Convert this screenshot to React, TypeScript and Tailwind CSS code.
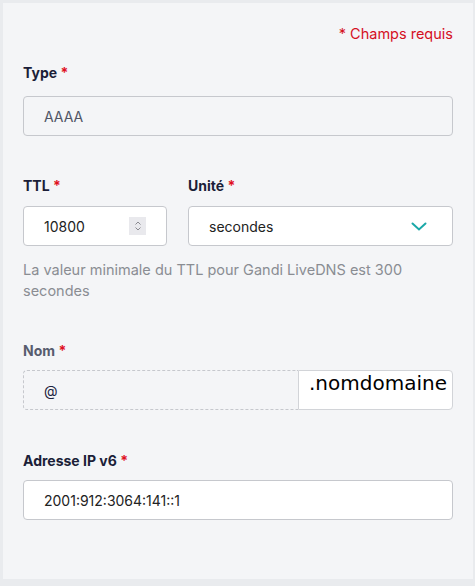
export default function App() {
  const font = { fontFamily: "Inter, 'Noto Sans', sans-serif" };
  return (
    <div className="min-h-[586px] bg-[#e9ebee] pt-[3px] pl-[3px] pr-[2px]" style={font}>
      <div className="bg-[#f4f5f7] px-5 pt-[21px] pb-[59px]">
        <div className="text-right text-[14.5px] leading-5 text-[#d5101f]">* Champs requis</div>

        {/* Type */}
        <Label className="mt-[19px]" text="Type" />
        <div className="mt-[13px] flex h-10 items-center rounded border border-[#c6c8cd] bg-[#f4f5f7] pl-5 text-[14px] text-[#505566]">
          AAAA
        </div>

        {/* TTL + unité */}
        <div className="mt-10 flex gap-[21px]">
          <div className="w-[144px]">
            <Label text="TTL" />
            <div className="mt-[10px] flex h-10 items-center justify-between rounded border border-[#c6c8cd] bg-white pl-5 pr-[20px] text-[14px] text-[#222]">
              <span>10800</span>
              <span className="flex h-[18px] w-[17px] flex-col items-center justify-center bg-[#e9e9ed]">
                <svg width="8" height="12" viewBox="0 0 8 12" fill="none" stroke="#8a8a90" strokeWidth="1">
                  <path d="M1.5 4.5 L4 2 L6.5 4.5" />
                  <path d="M1.5 7.5 L4 10 L6.5 7.5" />
                </svg>
              </span>
            </div>
          </div>
          <div className="flex-1">
            <Label text="Unité" />
            <div className="mt-[10px] flex h-10 items-center justify-between rounded border border-[#c6c8cd] bg-white pl-5 pr-[25px] text-[14px] text-[#222]">
              <span>secondes</span>
              <svg width="16" height="9" viewBox="0 0 16 9" fill="none" stroke="#1aa8a8" strokeWidth="2" strokeLinecap="round">
                <path d="M1.5 1.5 L8 7.5 L14.5 1.5" />
              </svg>
            </div>
          </div>
        </div>
        <p className="mt-[13px] pr-10 text-[14.5px] leading-[21px] text-[#8a8d93]">
          La valeur minimale du TTL pour Gandi LiveDNS est 300 secondes
        </p>

        {/* Nom */}
        <Label className="mt-10" text="Nom" muted />
        <div className="mt-[9px] flex h-10">
          <div className="flex flex-1 items-center rounded-l border border-r-0 border-dashed border-[#c6c8cd] pl-5 text-[14px] text-[#1d2340]">
            @
          </div>
          <div
            className="w-[155px] rounded-r border border-[#d2d4d8] bg-white pl-[10px] pt-[2px] text-[20px] leading-[20px] text-black"
            style={{ fontFamily: "'DejaVu Sans', sans-serif" }}
          >
            .nomdomaine
          </div>
        </div>

        {/* IPv6 */}
        <Label className="mt-[41px]" text="Adresse IP v6" />
        <div className="mt-[9px] flex h-10 items-center rounded border border-[#c6c8cd] bg-white pl-5 text-[14px] text-[#222]">
          2001:912:3064:141::1
        </div>
      </div>
    </div>
  );
}

function Label({ text, className = "", muted = false }: { text: string; className?: string; muted?: boolean }) {
  return (
    <div className={`text-[14px] font-bold leading-5 ${muted ? "text-[#575c6e]" : "text-[#1b1e38]"} ${className}`}>
      {text} <span className="text-[#e0101f]">*</span>
    </div>
  );
}
